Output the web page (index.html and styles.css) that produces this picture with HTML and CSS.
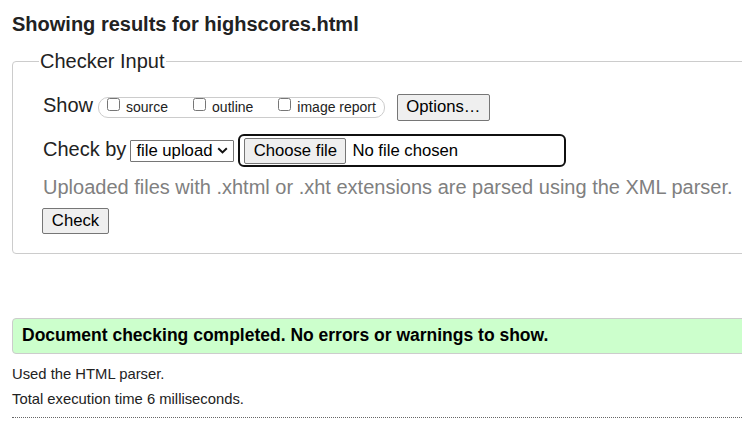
FILE: index.html
```html
<!DOCTYPE html>
<html lang="en">
<head>
<meta charset="utf-8">
<title>Showing results for highscores.html - Nu Html Checker</title>
<link rel="stylesheet" href="styles.css">
</head>
<body>
<div class="page">
  <h2 class="title">Showing results for highscores.html</h2>
  <form class="checker">
    <fieldset class="input-set">
      <legend class="input-legend">Checker Input</legend>
      <div class="row row-show">
        <span class="label">Show</span>
        <span class="pill">
          <label class="opt"><input type="checkbox" class="cb"><span class="opt-text">source</span></label>
          <label class="opt"><input type="checkbox" class="cb"><span class="opt-text">outline</span></label>
          <label class="opt"><input type="checkbox" class="cb"><span class="opt-text">image report</span></label>
        </span>
        <button type="button" class="btn btn-options">Options…</button>
      </div>
      <div class="row row-check">
        <span class="label">Check by</span>
        <span class="select">file upload<svg class="chev" width="11" height="7" viewBox="0 0 11 7"><path d="M1.2 1.3 L5.5 5.4 L9.8 1.3" fill="none" stroke="#111" stroke-width="2"/></svg></span>
        <span class="file-ring">
          <button type="button" class="btn btn-file">Choose file</button>
          <span class="file-name">No file chosen</span>
        </span>
      </div>
      <p class="hint">Uploaded files with .xhtml or .xht extensions are parsed using the XML parser.</p>
      <div class="row row-submit">
        <button type="button" class="btn btn-check">Check</button>
      </div>
    </fieldset>
  </form>
  <div class="success">Document checking completed. No errors or warnings to show.</div>
  <p class="details">Used the HTML parser.</p>
  <p class="details">Total execution time 6 milliseconds.</p>
  <hr class="sep">
</div>
</body>
</html>
```
FILE: styles.css
```css
html {
  overflow: hidden;
  background: #fff;
}
body {
  margin: 0;
  font-family: "Liberation Sans", Arial, sans-serif;
  color: #222;
}
.page {
  width: 780px;
  padding-left: 12px;
}
.title {
  margin: 12px 0 0 0;
  font-size: 20px;
  line-height: 24px;
  font-weight: bold;
  color: #222;
}
.checker {
  margin: 13px 0 0 0;
}
.input-set {
  margin: 0;
  border: 1px solid #ccc;
  border-radius: 4px;
  padding: 20px 0 19px 30px;
  min-width: 0;
}
.input-legend {
  font-size: 20px;
  line-height: 24px;
  padding: 0 1px;
  margin-left: -4px;
  color: #222;
}
.row {
  display: flex;
  align-items: baseline;
}
.label {
  font-size: 20px;
  line-height: 24px;
  color: #222;
}
.pill {
  display: inline-flex;
  align-items: baseline;
  height: 21px;
  box-sizing: border-box;
  border: 1px solid #ccc;
  border-radius: 10px;
  margin-left: 5px;
  padding: 0 8px 0 8px;
  gap: 25px;
  line-height: 19px;
}
.opt {
  display: inline-flex;
  align-items: baseline;
  font-size: 14px;
}
.cb {
  margin: 0 6px 0 0;
  width: 13px;
  height: 13px;
  position: relative;
  top: -1px;
}
.opt-text {
  color: #222;
}
.btn {
  font-family: "Liberation Sans", Arial, sans-serif;
  font-size: 16.7px;
  color: #000;
  background: #efefef;
  border: 1px solid #767676;
  border-radius: 2px;
  margin: 0;
  box-sizing: border-box;
}
.btn-options {
  margin-left: 12px;
  width: 93px;
  height: 27px;
  padding: 0;
}
.row-check {
  margin-top: 13px;
}
.select {
  display: inline-flex;
  align-items: center;
  box-sizing: border-box;
  height: 22px;
  width: 104px;
  margin-left: 4px;
  border: 1px solid #767676;
  border-radius: 1px;
  padding-left: 5px;
  font-size: 16.7px;
  line-height: 20px;
  color: #000;
}
.chev {
  margin-left: 5px;
}
.file-ring {
  display: inline-flex;
  align-items: baseline;
  box-sizing: border-box;
  width: 328px;
  height: 33px;
  margin-left: 4px;
  border: 2px solid #101010;
  border-radius: 6px;
  padding: 2px 4px;
}
.btn-file {
  width: 102px;
  height: 26px;
  padding: 0;
}
.file-name {
  margin-left: 6px;
  font-size: 16.7px;
  color: #000;
}
.hint {
  margin: 8px 0 0 0;
  font-size: 20px;
  line-height: 24px;
  color: #808080;
}
.row-submit {
  margin-top: 9px;
}
.btn-check {
  width: 67px;
  height: 26px;
  padding: 0;
  margin-left: -1px;
}
.success {
  margin-top: 64px;
  box-sizing: border-box;
  height: 36px;
  border: 1px solid #ccc;
  border-radius: 4px;
  background: #ccffcc;
  padding-left: 9px;
  display: flex;
  align-items: center;
  font-size: 17.5px;
  font-weight: bold;
  color: #000;
}
.details {
  margin: 0;
  font-size: 14.8px;
  line-height: 17px;
  color: #222;
}
.success + .details {
  margin-top: 12px;
}
.details + .details {
  margin-top: 8px;
}
.sep {
  margin: 9px 0 0 0;
  border: 0;
  border-top: 1px dotted #666;
  height: 0;
}
```
